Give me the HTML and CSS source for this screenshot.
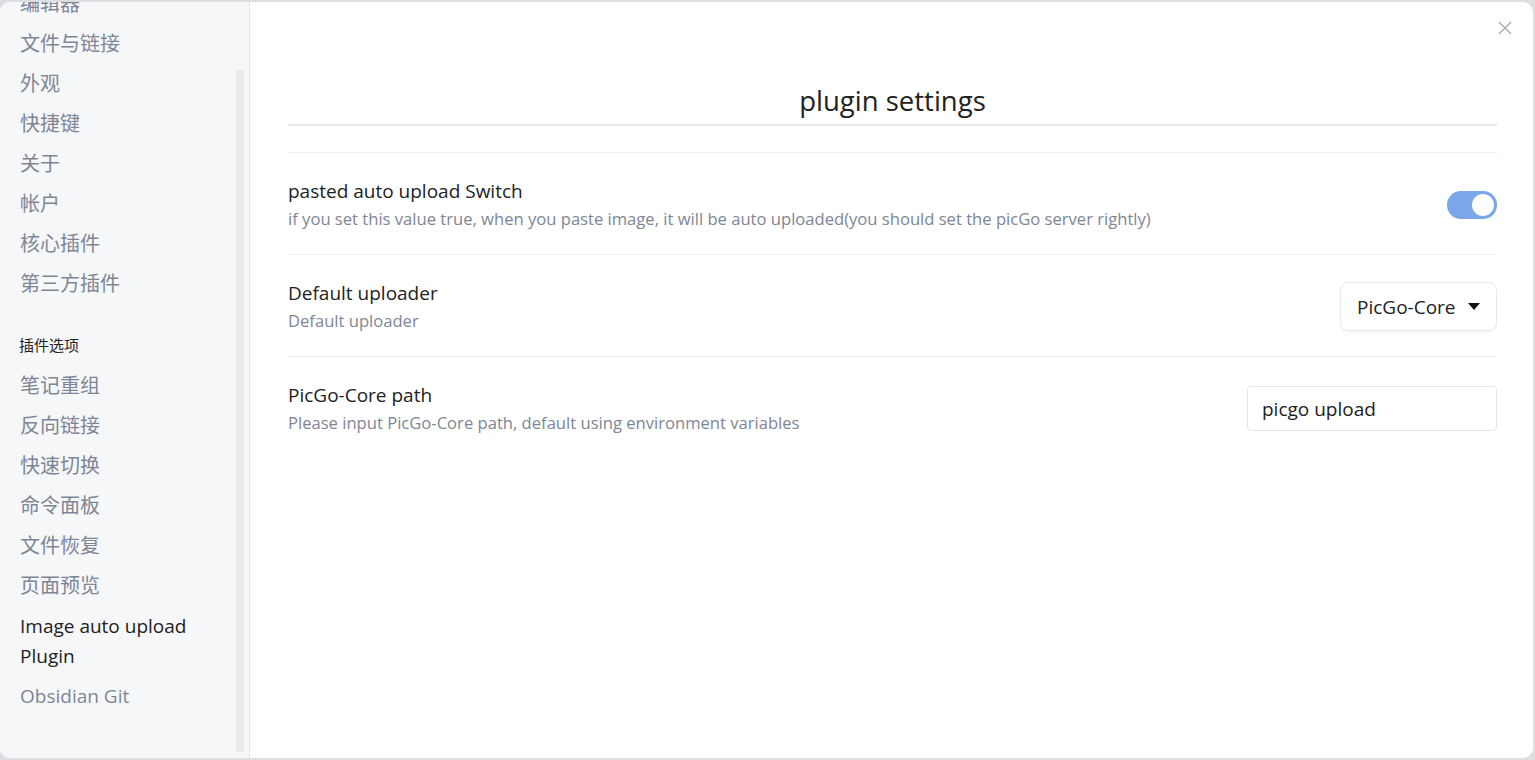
FILE: index.html
```html
<!DOCTYPE html>
<html lang="zh">
<head>
<meta charset="utf-8">
<title>plugin settings</title>
<link rel="stylesheet" href="styles.css">
</head>
<body>
<div class="modal">
  <aside class="sidebar">
    <div class="nav">
      <div class="nav-item cut">编辑器</div>
      <div class="nav-item">文件与链接</div>
      <div class="nav-item">外观</div>
      <div class="nav-item">快捷键</div>
      <div class="nav-item">关于</div>
      <div class="nav-item">帐户</div>
      <div class="nav-item">核心插件</div>
      <div class="nav-item">第三方插件</div>
      <div class="nav-heading">插件选项</div>
      <div class="nav-item">笔记重组</div>
      <div class="nav-item">反向链接</div>
      <div class="nav-item">快速切换</div>
      <div class="nav-item">命令面板</div>
      <div class="nav-item">文件恢复</div>
      <div class="nav-item">页面预览</div>
      <div class="nav-item latin active">Image auto upload Plugin</div>
      <div class="nav-item latin">Obsidian Git</div>
    </div>
    <div class="scroll-thumb"></div>
  </aside>
  <main class="content">
    <div class="close">
      <svg width="14" height="14" viewBox="0 0 14 14"><path d="M1 1 L13 13 M13 1 L1 13" stroke="#a3a7ad" stroke-width="1.3" fill="none"/></svg>
    </div>
    <h2 class="title">plugin settings</h2>
    <div class="settings">
      <div class="setting">
        <div class="info">
          <div class="name">pasted auto upload Switch</div>
          <div class="desc">if you set this value true, when you paste image, it will be auto uploaded(you should set the picGo server rightly)</div>
        </div>
        <div class="control"><div class="toggle"><div class="knob"></div></div></div>
      </div>
      <div class="setting">
        <div class="info">
          <div class="name">Default uploader</div>
          <div class="desc">Default uploader</div>
        </div>
        <div class="control">
          <div class="dropdown"><span>PicGo-Core</span><svg width="12" height="8" viewBox="0 0 12 8"><path d="M0 0 H12 L6 7 Z" fill="#111"/></svg></div>
        </div>
      </div>
      <div class="setting">
        <div class="info">
          <div class="name">PicGo-Core path</div>
          <div class="desc">Please input PicGo-Core path, default using environment variables</div>
        </div>
        <div class="control"><div class="input">picgo upload</div></div>
      </div>
    </div>
  </main>
</div>
</body>
</html>
```

FILE: styles.css
```css
* { box-sizing: border-box; }
html, body { margin: 0; padding: 0; }
body {
  background: #dcdee2;
  font-family: "Open Sans", "Noto Sans CJK SC", sans-serif;
  height: 760px;
  overflow: hidden;
}
.modal {
  margin: 2px 2px 0 0;
  height: 756px;
  background: #fff;
  border-radius: 10px;
  display: flex;
  overflow: hidden;
}
.sidebar {
  width: 250px;
  flex: none;
  background: #f6f7f9;
  border-right: 1px solid #e3e5e8;
  position: relative;
  overflow: hidden;
}
.nav {
  padding: 0 30px 0 20px;
  margin-top: -18px;
}
.nav-item {
  font-size: 20px;
  line-height: 30px;
  padding: 5px 0;
  color: #7e8695;
}
.nav-item.latin { font-size: 19px; }
.nav-item.active { color: #222; }
.nav-heading {
  font-size: 15px;
  line-height: 22px;
  color: #222;
  margin: 30px 0 10px -1px;
}
.scroll-thumb {
  position: absolute;
  left: 236px;
  top: 68px;
  width: 8px;
  bottom: 6px;
  background: #e8eaed;
}
.content {
  flex: 1;
  position: relative;
  padding: 0 36px 0 38px;
}
.close {
  position: absolute;
  right: 21px;
  top: 19px;
  width: 14px;
  height: 14px;
  display: flex;
}
.title {
  margin: 0;
  padding-top: 79px;
  text-align: center;
  font-weight: 400;
  font-size: 27.5px;
  line-height: 40px;
  color: #222;
  border-bottom: 2px solid #e6e9ee;
  padding-bottom: 3px;
}
.settings { margin-top: 26px; }
.setting {
  display: flex;
  align-items: center;
  border-top: 1px solid #eceef1;
  height: 102px;
  padding-top: 2px;
}
.info { flex: 1; }
.name {
  font-size: 19px;
  line-height: 28px;
  color: #222;
}
.desc {
  font-size: 16.6px;
  line-height: 27px;
  color: #7e8695;
}
.control { flex: none; display: flex; align-items: center; }
.toggle {
  width: 50px;
  height: 28px;
  border-radius: 14px;
  background: #7aa6ea;
  position: relative;
}
.knob {
  position: absolute;
  right: 3px;
  top: 3px;
  width: 22px;
  height: 22px;
  border-radius: 50%;
  background: #fff;
}
.dropdown {
  width: 157px;
  height: 49px;
  border: 1px solid #e8e9eb;
  border-radius: 8px;
  box-shadow: 0 1px 2px rgba(0,0,0,0.05);
  display: flex;
  align-items: center;
  justify-content: space-between;
  padding: 0 16px 0 16px;
  font-size: 19px;
  color: #222;
}
.input {
  width: 250px;
  height: 45px;
  border: 1px solid #e3e4e6;
  border-radius: 4px;
  display: flex;
  align-items: center;
  padding: 0 14px;
  font-size: 19px;
  color: #222;
}
```
